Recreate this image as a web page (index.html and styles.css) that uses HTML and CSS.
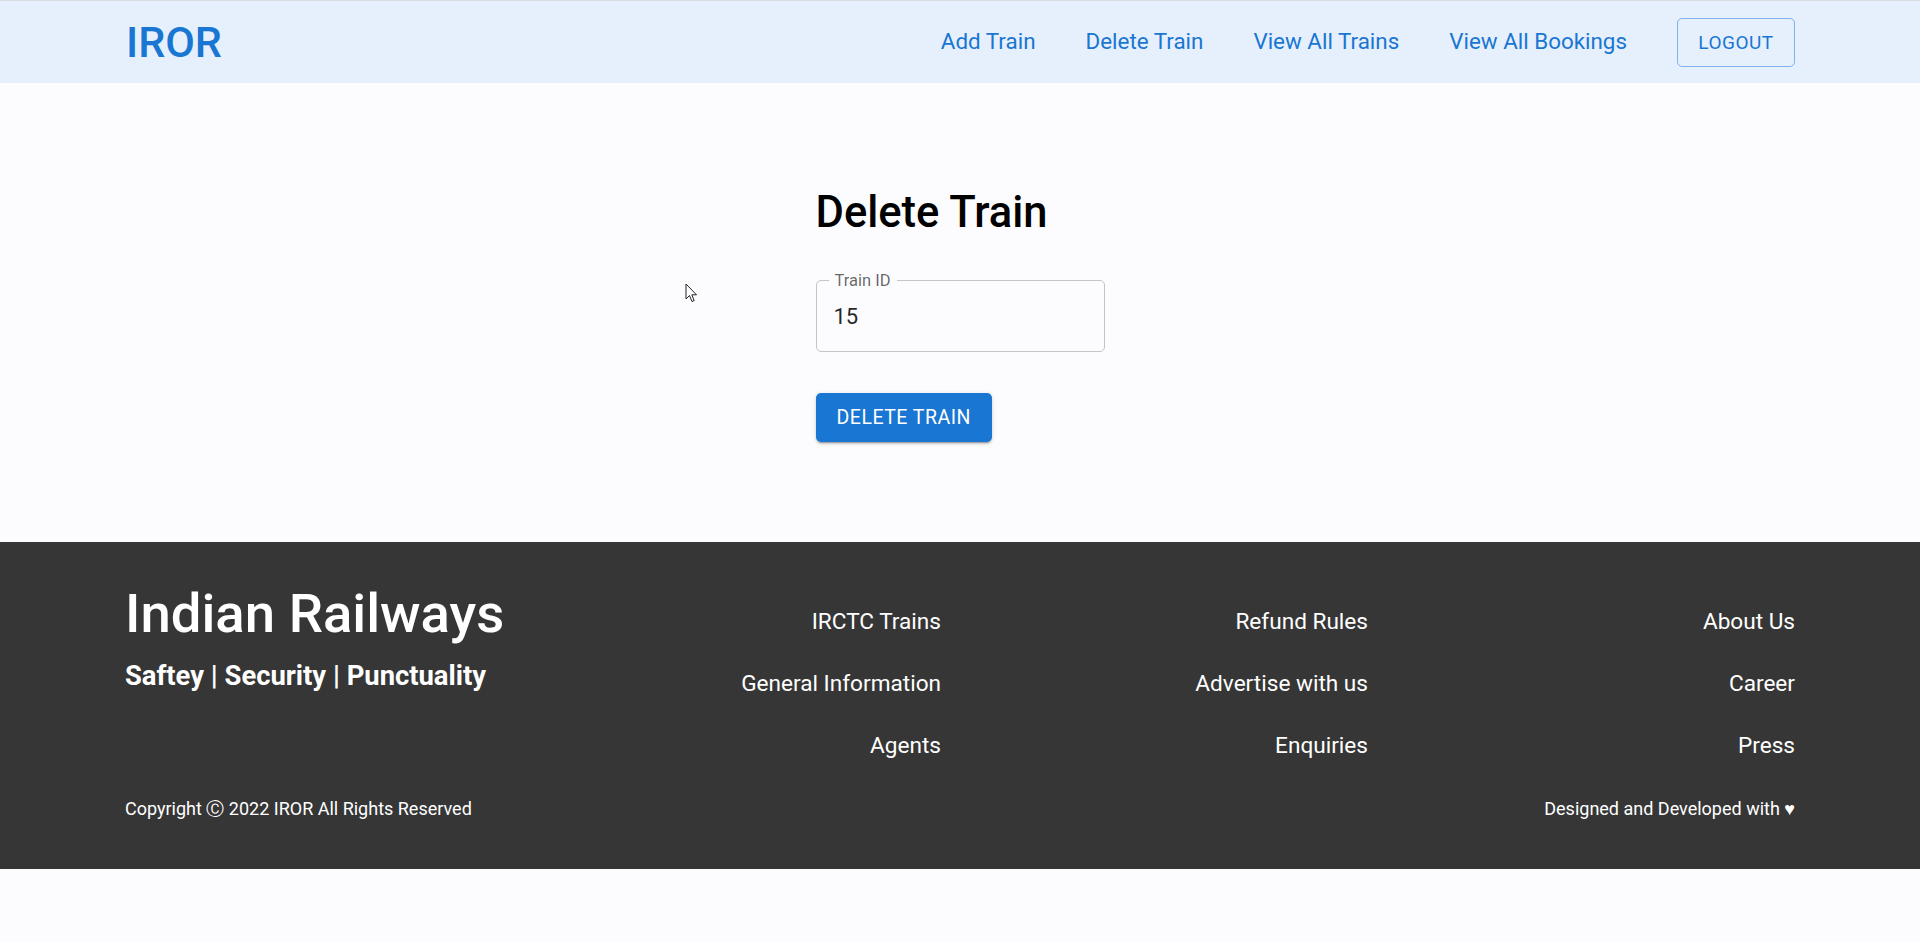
FILE: index.html
```html
<!DOCTYPE html>
<html lang="en">
<head>
<meta charset="utf-8">
<title>IROR - Delete Train</title>
<link rel="stylesheet" href="styles.css">
</head>
<body>
<header class="appbar">
  <div class="appbar-inner">
    <a class="brand" href="#">IROR</a>
    <nav class="nav">
      <a class="nav-link" href="#">Add Train</a>
      <a class="nav-link" href="#">Delete Train</a>
      <a class="nav-link" href="#">View All Trains</a>
      <a class="nav-link" href="#">View All Bookings</a>
      <button class="btn-outline" type="button">Logout</button>
    </nav>
  </div>
</header>

<main class="main">
  <form class="form">
    <h1 class="title">Delete Train</h1>
    <fieldset class="field">
      <legend class="field-label">Train ID</legend>
      <input class="field-input" type="text" value="15">
    </fieldset>
    <button class="btn-contained" type="button">Delete Train</button>
  </form>
  <svg class="cursor" width="13" height="20" viewBox="0 0 13 20" aria-hidden="true">
    <path d="M1 1 L1 16 L4.5 12.5 L7 18.5 L9.2 17.6 L6.8 11.8 L11.5 11.8 Z" fill="#ffffff" stroke="#222" stroke-width="1" stroke-linejoin="round"/>
  </svg>
</main>

<footer class="footer">
  <div class="footer-inner">
    <div class="footer-grid">
      <div class="footer-brand">
        <h2 class="footer-title">Indian Railways</h2>
        <p class="footer-sub">Saftey | Security | Punctuality</p>
      </div>
      <ul class="footer-col">
        <li><a href="#">IRCTC Trains</a></li>
        <li><a href="#">General Information</a></li>
        <li><a href="#">Agents</a></li>
      </ul>
      <ul class="footer-col">
        <li><a href="#">Refund Rules</a></li>
        <li><a href="#">Advertise with us</a></li>
        <li><a href="#">Enquiries</a></li>
      </ul>
      <ul class="footer-col">
        <li><a href="#">About Us</a></li>
        <li><a href="#">Career</a></li>
        <li><a href="#">Press</a></li>
      </ul>
    </div>
    <div class="footer-bottom">
      <span>Copyright Ⓒ 2022 IROR All Rights Reserved</span>
      <span>Designed and Developed with ♥</span>
    </div>
  </div>
</footer>
</body>
</html>
```

FILE: styles.css
```css
* { box-sizing: border-box; }

html, body {
  margin: 0;
  padding: 0;
  background: #fcfcfe;
  font-family: Roboto, "Liberation Sans", Arial, sans-serif;
}

a { text-decoration: none; color: inherit; }

/* Header */
.appbar {
  background: #e6f0fc;
  border-top: 1px solid #d8dbe0;
}
.appbar-inner {
  height: 82px;
  padding: 0 125px 0 126px;
  display: flex;
  align-items: center;
  justify-content: space-between;
}
.brand {
  color: #1976d2;
  font-size: 43px;
  font-weight: 500;
  line-height: 1;
}
.nav {
  display: flex;
  align-items: center;
  gap: 50px;
}
.nav-link {
  color: #1976d2;
  font-size: 22.4px;
  line-height: 1.4;
}
.btn-outline {
  height: 49px;
  width: 118px;
  padding: 0;
  border: 1px solid rgba(25, 118, 210, 0.5);
  border-radius: 5px;
  background: transparent;
  color: #1976d2;
  font-family: inherit;
  font-size: 19px;
  font-weight: 400;
  letter-spacing: 0.5px;
  text-transform: uppercase;
}

/* Main */
.main {
  position: relative;
  height: 459px;
  display: flex;
  justify-content: center;
  padding-top: 101px;
}
.form {
  width: 289px;
  display: flex;
  flex-direction: column;
  align-items: flex-start;
}
.title {
  margin: 0;
  font-size: 43.5px;
  font-weight: 500;
  line-height: 57px;
  color: #000;
}
.field {
  margin: 29px 0 0;
  padding: 0;
  width: 289px;
  border: 1px solid #c4c4c4;
  border-radius: 5px;
  min-inline-size: 0;
}
.field-label {
  margin-left: 12px;
  padding: 2px 6px 0;
  font-size: 16.5px;
  line-height: 18px;
  color: rgba(0, 0, 0, 0.6);
}
.field-input {
  display: block;
  width: 100%;
  border: 0;
  outline: 0;
  background: transparent;
  font-family: inherit;
  font-size: 22px;
  line-height: 24px;
  color: rgba(0, 0, 0, 0.87);
  padding: 15px 17px 22px;
}
.btn-contained {
  margin-top: 41px;
  height: 49px;
  padding: 0 21px;
  border: 0;
  border-radius: 5px;
  background: #1976d2;
  color: #fff;
  font-family: inherit;
  font-size: 19.5px;
  font-weight: 400;
  letter-spacing: 0.5px;
  text-transform: uppercase;
  box-shadow: 0 3px 1px -2px rgba(0,0,0,0.2), 0 2px 2px 0 rgba(0,0,0,0.14), 0 1px 5px 0 rgba(0,0,0,0.12);
}
.cursor {
  position: absolute;
  left: 685px;
  top: 200px;
}

/* Footer */
.footer {
  background: #363636;
  color: #fff;
}
.footer-inner {
  padding: 38px 125px 47px 125px;
}
.footer-grid {
  display: grid;
  grid-template-columns: 389px repeat(3, 1fr);
  align-items: start;
}
.footer-title {
  margin: 0;
  font-size: 54.5px;
  font-weight: 500;
  line-height: 67px;
}
.footer-sub {
  margin: 13px 0 0;
  font-size: 27.4px;
  font-weight: 700;
  line-height: 32px;
}
.footer-col {
  list-style: none;
  margin: 25px 0 0;
  padding: 0;
  display: flex;
  flex-direction: column;
  align-items: flex-end;
  gap: 29px;
}
.footer-col li {
  font-size: 22.6px;
  line-height: 33px;
}
.footer-bottom {
  margin-top: 34px;
  display: flex;
  justify-content: space-between;
  font-size: 18px;
  line-height: 26px;
}
```
